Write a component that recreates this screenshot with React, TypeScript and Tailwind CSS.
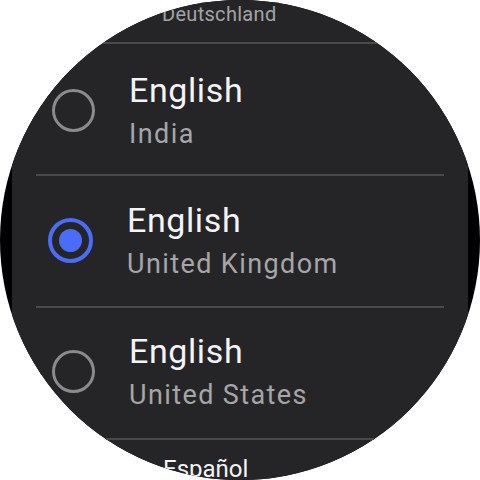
import React from "react";

type Locale = {
  name: string;
  region: string;
  selected?: boolean;
  rowClass: string;
};

const locales: Locale[] = [
  { name: "English", region: "India", rowClass: "pl-[40px] pt-[2px]" },
  { name: "English", region: "United Kingdom", selected: true, rowClass: "pl-[36px] pb-[2px]" },
  { name: "English", region: "United States", rowClass: "pl-[40px] pb-[4px]" },
];

function Divider() {
  return <div className="mx-[24px] h-[2px] shrink-0 bg-[#4a4a4c]" />;
}

function Radio({ selected }: { selected?: boolean }) {
  if (selected) {
    return (
      <div className="flex h-[45px] w-[45px] shrink-0 items-center justify-center rounded-full border-[4px] border-[#4a6cf6]">
        <div className="h-[23px] w-[23px] rounded-full bg-[#4a6cf6]" />
      </div>
    );
  }
  return <div className="h-[43px] w-[43px] shrink-0 rounded-full border-[3px] border-[#8b8b8d]" />;
}

function Row({ item }: { item: Locale }) {
  return (
    <div className={`flex h-[130px] shrink-0 items-center gap-[34px] ${item.rowClass}`}>
      <Radio selected={item.selected} />
      <div className="flex flex-col">
        <span className="text-[34px] leading-[40px] tracking-[0.6px] text-[#f4f4f6]">{item.name}</span>
        <span className="mt-[8px] text-[27px] leading-[32px] tracking-[1.4px] text-[#a6a6a8]">
          {item.region}
        </span>
      </div>
    </div>
  );
}

export default function App() {
  return (
    <div className="h-[480px] w-[480px] bg-white">
      {/* watch face: black bezel circle, grey screen strip clipped by it */}
      <div className="h-full w-full overflow-hidden rounded-full bg-black">
        <div
          className="mx-[12px] flex h-full flex-col bg-[#252527]"
          style={{ fontFamily: "Roboto, 'Noto Sans', sans-serif" }}
        >
          <div className="h-[42px] shrink-0 pl-[150px] pt-[2px] text-[20px] leading-[24px] tracking-[0.3px] text-[#a4a4a6]">
            Deutschland
          </div>
          <Divider />
          {locales.map((item, i) => (
            <React.Fragment key={item.region}>
              {i > 0 && <Divider />}
              <Row item={item} />
            </React.Fragment>
          ))}
          <Divider />
          <div className="pl-[151px] pt-[15px] text-[24px] leading-[28px] text-[#f4f4f6]">Español</div>
        </div>
      </div>
    </div>
  );
}
